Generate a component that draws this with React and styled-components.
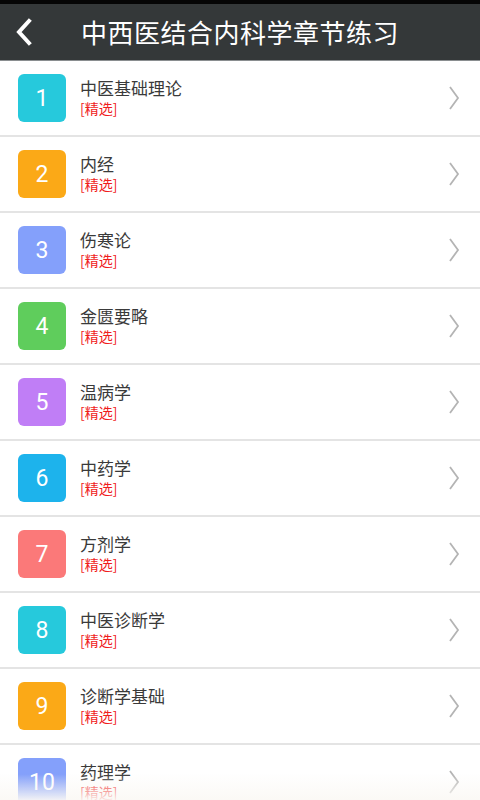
import React from 'react';
import styled, { createGlobalStyle } from 'styled-components';

const GlobalStyle = createGlobalStyle`
  html, body {
    margin: 0;
    padding: 0;
    background: #ffffff;
  }
  body {
    font-family: "Noto Sans CJK SC", "Roboto", sans-serif;
  }
`;

const Page = styled.div`
  width: 480px;
  min-height: 800px;
  background: #fff;
`;

const Header = styled.div`
  height: 56px;
  border-top: 4px solid #050505;
  border-bottom: 1px solid #8a8e90;
  background: #343839;
  display: flex;
  align-items: center;
  position: relative;
`;

const BackButton = styled.div`
  width: 48px;
  height: 56px;
  display: flex;
  align-items: center;
  justify-content: center;
`;

const HeaderTitle = styled.div`
  flex: 1;
  text-align: center;
  margin-right: 48px;
  color: #ffffff;
  font-size: 26px;
  letter-spacing: 0.5px;
  line-height: 56px;
`;

const List = styled.div`
  display: flex;
  flex-direction: column;
`;

const Row = styled.div`
  height: 74px;
  border-bottom: 2px solid #e4e4e4;
  display: flex;
  align-items: center;
  padding: 0 18px;
`;

const NumBox = styled.div`
  width: 48px;
  height: 48px;
  border-radius: 6px;
  background: ${(p) => p.color};
  color: #fff;
  font-family: "Roboto", "Noto Sans", sans-serif;
  font-size: 23px;
  display: flex;
  align-items: center;
  justify-content: center;
  flex-shrink: 0;
`;

const Texts = styled.div`
  flex: 1;
  margin-left: 14px;
  display: flex;
  flex-direction: column;
  margin-top: -2px;
`;

const Name = styled.div`
  font-size: 17px;
  color: #3a3a3a;
  line-height: 22px;
`;

const Tag = styled.div`
  font-size: 14px;
  color: #f01c1c;
  line-height: 18px;
`;

const Arrow = styled.div`
  width: 20px;
  display: flex;
  justify-content: center;
  margin-right: -2px;
`;

const Fade = styled.div`
  position: fixed;
  left: 0;
  bottom: 0;
  width: 480px;
  height: 26px;
  pointer-events: none;
  background: linear-gradient(to bottom, rgba(255,255,255,0), rgba(250,248,244,0.92));
`;

const items = [
  { name: '中医基础理论', color: '#26c9dc' },
  { name: '内经', color: '#fba917' },
  { name: '伤寒论', color: '#84a0fb' },
  { name: '金匮要略', color: '#5fcd5c' },
  { name: '温病学', color: '#c07ef6' },
  { name: '中药学', color: '#1db3ec' },
  { name: '方剂学', color: '#fb7979' },
  { name: '中医诊断学', color: '#26c9dc' },
  { name: '诊断学基础', color: '#fba917' },
  { name: '药理学', color: '#84a0fb' },
];

const App = () => {
  return (
    <Page>
      <GlobalStyle />
      <Header>
        <BackButton>
          <svg width="20" height="28" viewBox="0 0 20 28">
            <path d="M15 3 L5 14 L15 25" fill="none" stroke="#fff" strokeWidth="4" strokeLinecap="square" />
          </svg>
        </BackButton>
        <HeaderTitle>中西医结合内科学章节练习</HeaderTitle>
      </Header>
      <List>
        {items.map((item, i) => (
          <Row key={i}>
            <NumBox color={item.color}>{i + 1}</NumBox>
            <Texts>
              <Name>{item.name}</Name>
              <Tag>[精选]</Tag>
            </Texts>
            <Arrow>
              <svg width="12" height="24" viewBox="0 0 12 24">
                <path d="M2 1 L10 12 L2 23" fill="none" stroke="#b4b4b4" strokeWidth="1.8" />
              </svg>
            </Arrow>
          </Row>
        ))}
      </List>
      <Fade />
    </Page>
  );
};

export default App;
